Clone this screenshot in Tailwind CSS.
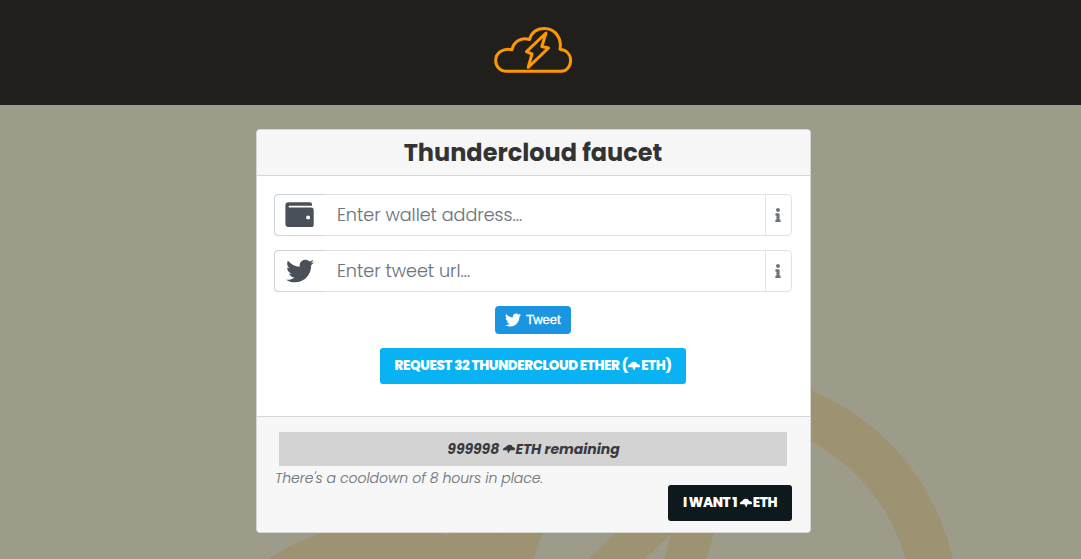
<!DOCTYPE html>
<html lang="en">
<head>
<meta charset="utf-8">
<title>Thundercloud faucet</title>
<script src="https://cdn.jsdelivr.net/npm/@tailwindcss/browser@4"></script>
</head>
<body class="relative h-[559px] overflow-hidden bg-[#9d9c8b] font-[Poppins,Inter,sans-serif]">
<svg class="absolute inset-0" width="1081" height="559" viewBox="0 0 1081 559">
  <g fill="#9d9272">
    <circle cx="719.6" cy="611.2" r="216" fill="none" stroke="#9d9272" stroke-width="46"/>
    <path d="M269 559Q292 543 321 533Q385 514 447 535.5L453 530H501L487 559ZM589 559L623 525H680L645 559ZM664 559L672 530H715L706 559Z"/>
  </g>
</svg>
<svg class="hidden">
  <symbol id="bird" viewBox="0 0 512 512"><path d="M459.37 151.716c.325 4.548.325 9.097.325 13.645 0 138.72-105.583 298.558-298.558 298.558-59.452 0-114.68-17.219-161.137-47.106 8.447.974 16.568 1.299 25.34 1.299 49.055 0 94.213-16.568 130.274-44.832-46.132-.975-84.792-31.188-98.112-72.772 6.498.974 12.995 1.624 19.818 1.624 9.421 0 18.843-1.3 27.614-3.573-48.081-9.747-84.143-51.98-84.143-102.985v-1.299c13.969 7.797 30.214 12.67 47.431 13.319-28.264-18.843-46.781-51.005-46.781-87.391 0-19.492 5.197-37.36 14.294-52.954 51.655 63.675 129.3 105.258 216.365 109.807-1.624-7.797-2.599-15.918-2.599-24.04 0-57.828 46.782-104.934 104.934-104.934 30.213 0 57.502 12.67 76.67 33.137 23.715-4.548 46.456-13.32 66.599-25.34-7.798 24.366-24.366 44.833-46.132 57.827 21.117-2.273 41.584-8.122 60.426-16.243-14.292 20.791-32.161 39.308-52.628 54.253z"/></symbol>
  <symbol id="info" viewBox="0 0 192 512"><path d="M20 424.229h20V279.771H20c-11.046 0-20-8.954-20-20V212c0-11.046 8.954-20 20-20h112c11.046 0 20 8.954 20 20v212.229h20c11.046 0 20 8.954 20 20V492c0 11.046-8.954 20-20 20H20c-11.046 0-20-8.954-20-20v-47.771c0-11.046 8.954-20 20-20zM96 0C56.235 0 24 32.235 24 72s32.235 72 72 72 72-32.235 72-72S135.764 0 96 0z"/></symbol>
  <symbol id="storm" viewBox="0 0 12 10"><path d="M0 5.5C0 4.2.9 3.4 2.2 3.3 2.7 1.5 4 .7 5.8.7c1.7 0 2.8.8 3.3 2.2 1.7 0 2.9.9 2.9 2.3 0 .5-.2.9-.6 1.1H7.6L6.3 9.3 5.5 9 5.8 7.6H4.5L4.8 6.3H.4C.1 6.1 0 5.8 0 5.5Z"/></symbol>
</svg>
<div class="relative">
  <header class="flex h-[105px] justify-center bg-[#201f1c] pt-[25px] pr-[15px]">
    <svg class="h-[50px] w-[80px]" viewBox="0 0 80 50" fill="none" stroke="#ff9800" stroke-width="3" stroke-linejoin="round" stroke-linecap="round">
      <path d="M12.5 46.2H68C73.5 46.2 77.6 41.7 77.6 35.5C77.6 29.5 73.5 25 67 24.2C69 12.5 61.5 3.5 51.5 3.5C44 3.5 38.5 7.5 36.5 14.5C28.5 11.8 20.5 16.5 19 24.8C10 22.8 2.7 28 2.7 35.5C2.7 41.5 7 46.2 12.5 46.2Z"/>
      <path d="M53 8L33.5 26.7L39 29L35.2 42.3L55.5 23L48.8 21.5Z"/>
    </svg>
  </header>
  <main class="mt-6 ml-[256px] flex h-[404px] w-[555px] flex-col overflow-hidden rounded-[4px] border border-[#d5d5d2] bg-white">
    <h1 class="flex h-[46px] shrink-0 items-center justify-center border-b border-[#d5d7d9] bg-[#f7f7f7] pr-px text-[24px] font-bold text-[#333]">Thundercloud faucet</h1>
    <section class="flex h-[240px] shrink-0 flex-col items-center pt-[18px] pr-[18px] pl-[17px]">
      <div class="flex h-[42px] w-[518px] rounded-[4px] border border-[#dee2e6]">
        <div class="-my-px -ml-px flex w-[50px] items-center rounded-l-[4px] border-y border-l border-[#ced4da] pl-[10px] text-[#495057]">
          <svg class="h-[26px] w-[29px]" viewBox="0 0 29 26" fill="currentColor"><path fill-rule="evenodd" d="M3.8.3H25Q27 .3 27 2.5V3.8H4.6Q3.6 3.8 3.6 4.7T4.6 5.6H26.2Q28.7 5.6 28.7 8V22.4Q28.7 25 26.2 25H3.6Q.4 25 .4 21.8V3.5Q.4.3 3.8.3ZM23.1 13.4A2 2 0 1 0 23.1 17.4A2 2 0 1 0 23.1 13.4Z"/></svg>
        </div>
        <div class="flex flex-1 items-center pl-[13px] text-[17.6px] font-light text-[#6c757d] [-webkit-text-stroke:0.1px_#6c757d]">Enter wallet address...</div>
        <div class="flex w-[26px] items-center justify-center border-l border-[#dee2e6] pr-px text-[#6c757d]"><svg class="h-[14px] w-[6px]" fill="currentColor"><use href="#info"/></svg></div>
      </div>
      <div class="mt-[14px] flex h-[42px] w-[518px] rounded-[4px] border border-[#dee2e6]">
        <div class="-my-px -ml-px flex w-[50px] items-center rounded-l-[4px] border-y border-l border-[#ced4da] pl-[11px] text-[#495057]">
          <svg class="h-[28px] w-[28px]" fill="currentColor"><use href="#bird"/></svg>
        </div>
        <div class="flex flex-1 items-center pl-[13px] text-[17.6px] font-light text-[#6c757d] [-webkit-text-stroke:0.1px_#6c757d]">Enter tweet url...</div>
        <div class="flex w-[26px] items-center justify-center border-l border-[#dee2e6] pr-px text-[#6c757d]"><svg class="h-[14px] w-[6px]" fill="currentColor"><use href="#info"/></svg></div>
      </div>
      <button class="mt-[14px] flex h-[28px] w-[76px] items-center rounded-[4px] bg-[#1b95e0] pl-[10px] font-['Liberation_Sans',Arial,sans-serif] text-[13px] font-medium text-white [-webkit-text-stroke:0.35px_white]"><svg class="mr-[5px] h-4 w-4" fill="currentColor"><use href="#bird"/></svg>Tweet</button>
      <button class="mt-[14px] flex h-[36px] w-[306px] items-center justify-center rounded-[3px] bg-[#09b3f3] text-[13.5px] font-extrabold tracking-[-0.43px] whitespace-pre text-white">REQUEST 32 THUNDERCLOUD ETHER (<svg class="mr-px ml-[0.5px] h-[10px] w-[12px]" fill="currentColor"><use href="#storm"/></svg>ETH)</button>
    </section>
    <footer class="flex flex-1 flex-col border-t border-[#d5d7d9] bg-[#f7f7f7] pt-[15px] pr-[18px] pl-[17px]">
      <div class="mx-[5px] flex h-[34px] items-center justify-center bg-[#d3d3d3] pl-px text-[14px] font-bold tracking-[-0.05px] whitespace-pre text-[#3a3a42] italic">999998 <svg class="ml-px h-[10px] w-[12px] -skew-x-12" fill="currentColor"><use href="#storm"/></svg>ETH remaining</div>
      <p class="h-[19px] pt-px pl-px text-[14px] leading-[22px] font-light tracking-[-0.05px] whitespace-nowrap text-[#6c757d] italic [-webkit-text-stroke:0.1px_#6c757d]">There's a cooldown of 8 hours in place.</p>
      <button class="flex h-[36px] w-[124px] items-center justify-center self-end rounded-[3px] bg-[#0e191d] text-[13.5px] font-extrabold tracking-[-0.45px] whitespace-pre text-white">I WANT 1 <svg class="mr-px ml-[0.5px] h-[10px] w-[12px]" fill="currentColor"><use href="#storm"/></svg>ETH</button>
    </footer>
  </main>
</div>
</body>
</html>
